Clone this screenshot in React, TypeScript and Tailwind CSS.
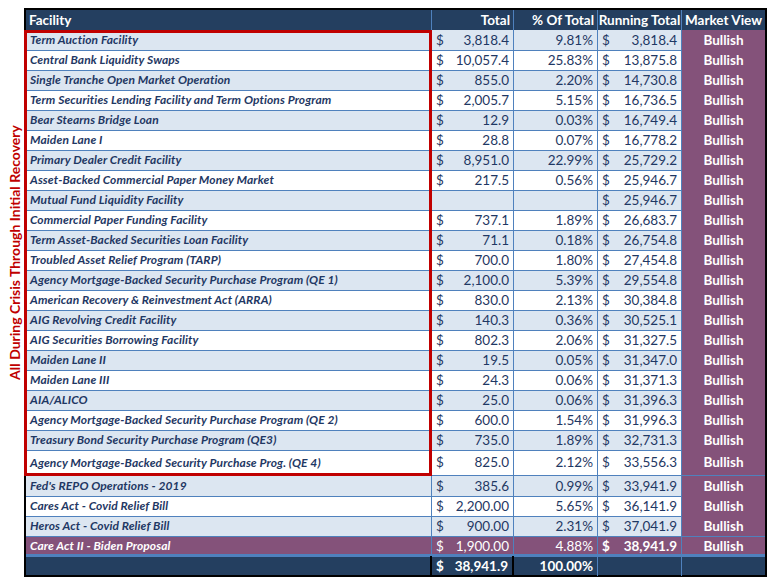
const rows: [string, string, string, string][] = [
  ["Term Auction Facility", "3,818.4", "9.81%", "3,818.4"],
  ["Central Bank Liquidity Swaps", "10,057.4", "25.83%", "13,875.8"],
  ["Single Tranche Open Market Operation", "855.0", "2.20%", "14,730.8"],
  ["Term Securities Lending Facility and Term Options Program", "2,005.7", "5.15%", "16,736.5"],
  ["Bear Stearns Bridge Loan", "12.9", "0.03%", "16,749.4"],
  ["Maiden Lane I", "28.8", "0.07%", "16,778.2"],
  ["Primary Dealer Credit Facility", "8,951.0", "22.99%", "25,729.2"],
  ["Asset-Backed Commercial Paper Money Market", "217.5", "0.56%", "25,946.7"],
  ["Mutual Fund Liquidity Facility", "", "", "25,946.7"],
  ["Commercial Paper Funding Facility", "737.1", "1.89%", "26,683.7"],
  ["Term Asset-Backed Securities Loan Facility", "71.1", "0.18%", "26,754.8"],
  ["Troubled Asset Relief Program (TARP)", "700.0", "1.80%", "27,454.8"],
  ["Agency Mortgage-Backed Security Purchase Program (QE 1)", "2,100.0", "5.39%", "29,554.8"],
  ["American Recovery & Reinvestment Act (ARRA)", "830.0", "2.13%", "30,384.8"],
  ["AIG Revolving Credit Facility", "140.3", "0.36%", "30,525.1"],
  ["AIG Securities Borrowing Facility", "802.3", "2.06%", "31,327.5"],
  ["Maiden Lane II", "19.5", "0.05%", "31,347.0"],
  ["Maiden Lane III", "24.3", "0.06%", "31,371.3"],
  ["AIA/ALICO", "25.0", "0.06%", "31,396.3"],
  ["Agency Mortgage-Backed Security Purchase Program (QE 2)", "600.0", "1.54%", "31,996.3"],
  ["Treasury Bond Security Purchase Program (QE3)", "735.0", "1.89%", "32,731.3"],
  ["Agency Mortgage-Backed Security Purchase Prog. (QE 4)", "825.0", "2.12%", "33,556.3"],
  ["Fed's REPO Operations - 2019", "385.6", "0.99%", "33,941.9"],
  ["Cares Act - Covid Relief Bill", "2,200.00", "5.65%", "36,141.9"],
  ["Heros Act - Covid Relief Bill", "900.00", "2.31%", "37,041.9"],
];

const cell = "border-r border-b border-[#4f81bd] px-[4px] flex items-center";
const fac = "font-bold italic whitespace-nowrap text-[12px] tracking-[0.1px] [font-family:'Open_Sans',Lato,sans-serif]";

export default function App() {
  return (
    <div className="w-[772px] h-[585px] bg-white relative" style={{ fontFamily: "Lato, 'Open Sans', sans-serif" }}>
      <div className="absolute left-[5px] top-[30px] h-[445px] w-[18px] flex items-center justify-center">
        <span className="-rotate-90 whitespace-nowrap text-[14px] font-bold text-[#c00000]">
          All During Crisis Through Initial Recovery
        </span>
      </div>
      <div className="absolute left-[24px] top-[8px] w-[743px] border-2 border-black">
        <div className="grid grid-cols-[406px_82px_84px_84px_83px] h-[20px] bg-[#243f60] text-white text-[13.5px] font-bold">
          <div className="px-[3px] flex items-center border-r border-[#4f81bd]">Facility</div>
          <div className="px-[3px] flex items-center justify-end border-r border-[#4f81bd]">Total</div>
          <div className="px-[3px] flex items-center justify-end border-r border-[#4f81bd]">% Of Total</div>
          <div className="flex items-center justify-center border-r border-[#4f81bd] whitespace-nowrap overflow-hidden">Running Total</div>
          <div className="flex items-center justify-center">Market View</div>
        </div>
        <div className="relative">
          <div className="absolute left-[-2px] top-0 w-[408px] h-[446px] border-[3px] border-[#c00000] pointer-events-none z-10" />
          {rows.map((r, i) => {
            const bg = i % 2 === 0 ? "bg-[#dce6f1]" : "bg-white";
            const h = i === 21 ? "h-[26px]" : "h-[20px]";
            return (
              <div key={i} className={`grid grid-cols-[406px_82px_84px_84px_83px] ${h} ${bg} text-[13.5px] text-[#1f3864]`}>
                <div className={`${cell} ${fac}`}>{r[0]}</div>
                <div className={`${cell} justify-between`}>
                  {r[1] && <><span>$</span><span>{r[1]}</span></>}
                </div>
                <div className={`${cell} justify-end`}>{r[2]}</div>
                <div className={`${cell} justify-between`}><span>$</span><span>{r[3]}</span></div>
                <div className="border-b border-[#4f81bd] bg-[#84527a] text-white font-bold flex items-center justify-center">Bullish</div>
              </div>
            );
          })}
          <div className="grid grid-cols-[406px_82px_84px_84px_83px] h-[20px] bg-[#84527a] text-white text-[13.5px] border-b-2 border-[#4f81bd]">
            <div className={`${cell} ${fac}`}>Care Act II - Biden Proposal</div>
            <div className={`${cell} justify-between`}><span>$</span><span>1,900.00</span></div>
            <div className={`${cell} justify-end`}>4.88%</div>
            <div className={`${cell} justify-between font-bold`}><span>$</span><span>38,941.9</span></div>
            <div className="border-b border-[#4f81bd] font-bold flex items-center justify-center">Bullish</div>
          </div>
          <div className="grid grid-cols-[406px_82px_84px_84px_83px] h-[19px] bg-[#243f60] text-white text-[13.5px] font-bold">
            <div className="border-r-2 border-black" />
            <div className="px-[4px] flex items-center justify-between border-r-2 border-black"><span>$</span><span>38,941.9</span></div>
            <div className="px-[4px] flex items-center justify-end border-r border-[#4f81bd]">100.00%</div>
            <div className="border-r border-[#4f81bd]" />
            <div />
          </div>
        </div>
      </div>
    </div>
  );
}
